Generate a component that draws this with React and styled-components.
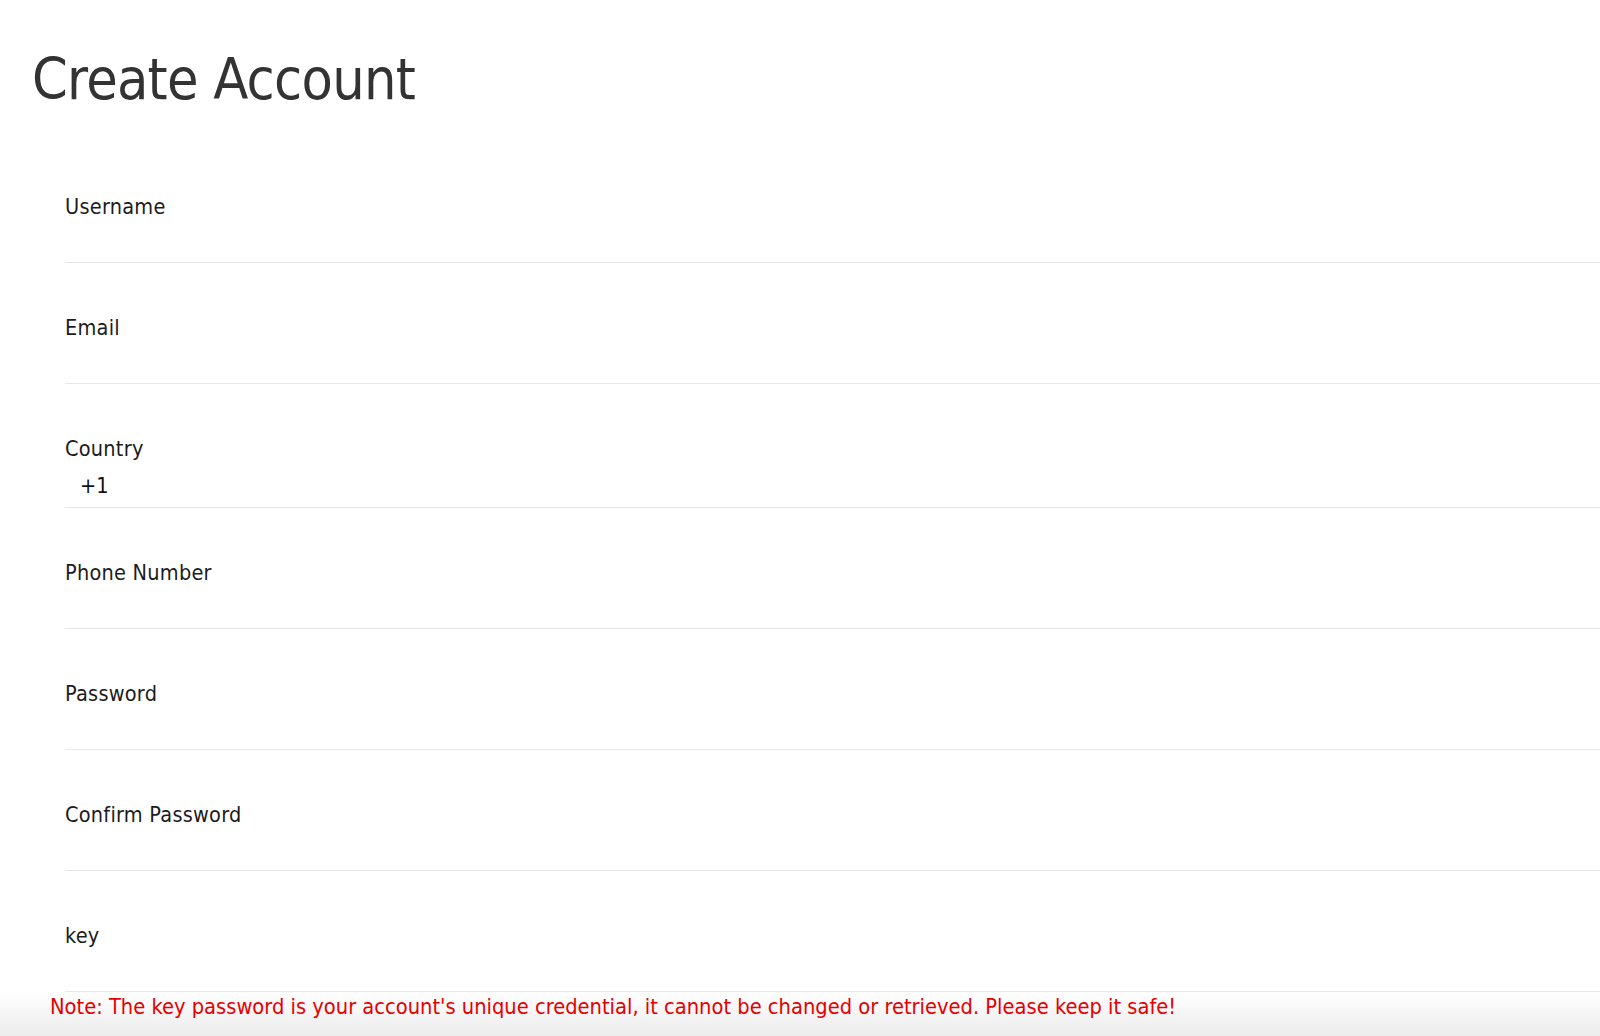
import React from "react";
import styled, { createGlobalStyle } from "styled-components";

const GlobalStyle = createGlobalStyle`
  html, body {
    margin: 0;
    padding: 0;
    background: #ffffff;
  }
  body {
    font-family: "DejaVu Sans Condensed", "DejaVu Sans", sans-serif;
    font-stretch: condensed;
  }
  * { box-sizing: border-box; }
`;

const Page = styled.div`
  display: flex;
  flex-direction: column;
  width: 1600px;
  height: 1036px;
  overflow: hidden;
`;

const Title = styled.h1`
  margin: 46px 0 0 32px;
  font-size: 57px;
  line-height: 66px;
  font-weight: 400;
  color: #333333;
  letter-spacing: -0.75px;
`;

const Form = styled.form`
  display: flex;
  flex: 1;
  flex-direction: column;
  margin-top: 30px;
`;

const Fields = styled.div`
  display: flex;
  flex-direction: column;
  padding-left: 65px;
`;

const Row = styled.div`
  display: flex;
  flex-direction: column;
  height: ${(p) => (p.$tall ? 124 : 121)}px;
  padding-top: 53px;
  border-bottom: 1px solid #e6e6e6;
`;

const Label = styled.label`
  font-size: 21.5px;
  line-height: 24px;
  letter-spacing: 0.25px;
  color: #1c1c1c;
`;

const Input = styled.input`
  flex: 1;
  border: none;
  outline: none;
  background: transparent;
  padding: 0;
  font: inherit;
  font-size: 21px;
`;

const Prefix = styled.div`
  padding: 13px 0 0 15px;
  font-size: 21.5px;
  line-height: 24px;
  color: #111111;
`;

const NoteBar = styled.div`
  display: flex;
  flex: 1;
  padding: 3px 0 0 50px;
  background: linear-gradient(to bottom, #ffffff 0%, #f7f7f7 40%, #ebebeb 100%);
`;

const Note = styled.p`
  margin: 0;
  font-size: 21.7px;
  line-height: 24px;
  color: #e60000;
  white-space: nowrap;
`;

const fields = [
  { label: "Username", type: "text" },
  { label: "Email", type: "email" },
  { label: "Country", prefix: "+1" },
  { label: "Phone Number", type: "tel" },
  { label: "Password", type: "password" },
  { label: "Confirm Password", type: "password" },
  { label: "key", type: "password" },
];

export default function App() {
  return (
    <>
      <GlobalStyle />
      <Page>
        <Title>Create Account</Title>
        <Form onSubmit={(e) => e.preventDefault()}>
          <Fields>
            {fields.map((f) => (
              <Row key={f.label} $tall={!!f.prefix}>
                <Label>{f.label}</Label>
                {f.prefix ? <Prefix>{f.prefix}</Prefix> : <Input type={f.type} aria-label={f.label} />}
              </Row>
            ))}
          </Fields>
          <NoteBar>
            <Note>
              Note: The key password is your account's unique credential, it cannot be changed or retrieved. Please keep it safe!
            </Note>
          </NoteBar>
        </Form>
      </Page>
    </>
  );
}
